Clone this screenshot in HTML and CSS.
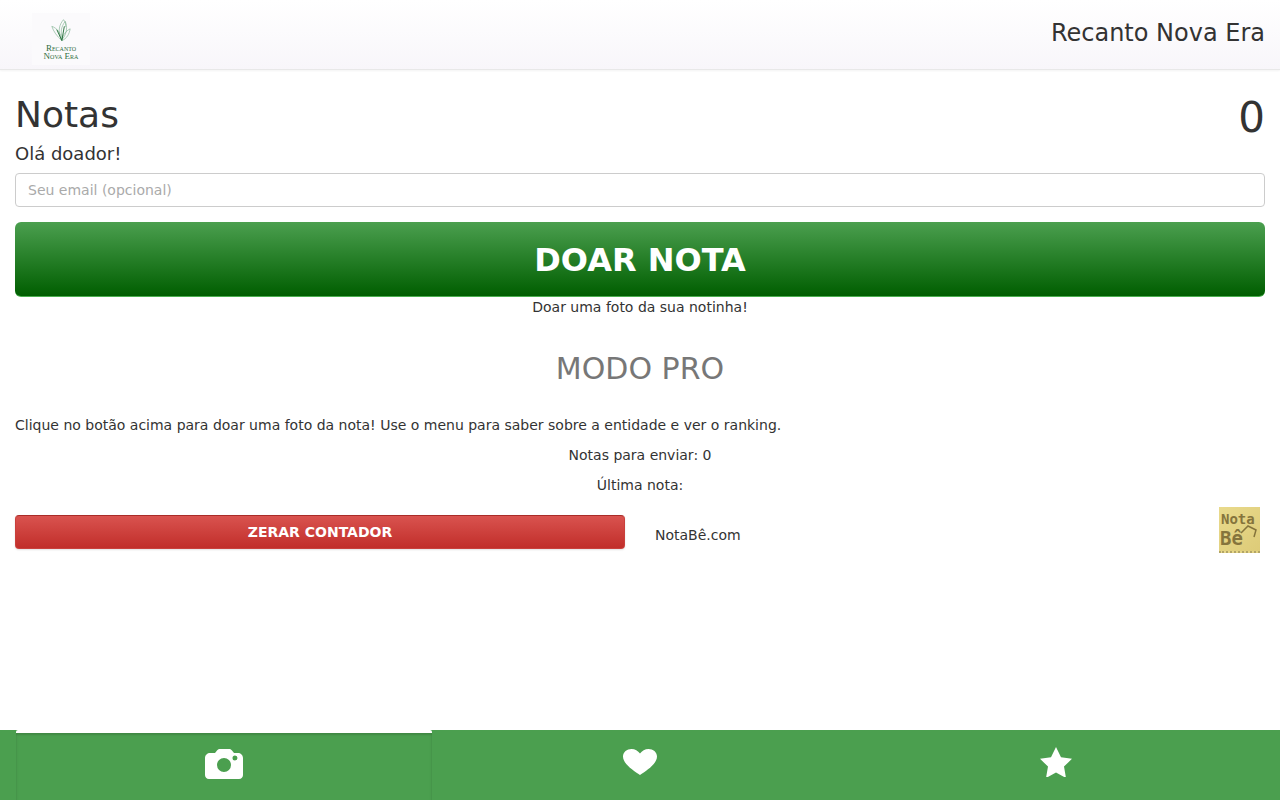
FILE: index.html
```html
<!DOCTYPE html>
<html lang="pt-BR">
<head>
  <meta charset="UTF-8" />
  <meta name="viewport" content="width=device-width, initial-scale=1.0"/>
  <title>Recanto Nova Era - Notas</title>
  <link rel="stylesheet" href="styles.css">
</head>
<body>
  <header class="topo">
    <div class="logo">
      <svg class="logo-folha" width="20" height="25" viewBox="0 0 24 28" fill="none" stroke="#5f9f75" stroke-width="0.6">
        <path d="M13 26C7 21 3 15 1 9c6 2 11 8 12 17z"/>
        <path d="M12 24C8 14 10 7 15 1c3 3 3 7 2 9"/>
        <path d="M14 24c-3-8-2-14 3-21 3 6 2 15-3 21z"/>
        <path d="M13 26c1-6 4-11 10-14-1 6-4 12-10 14z"/>
        <path d="M13 26L7 13M13 26L16 9" stroke="#1f6b35" stroke-width="1.100"/>
      </svg>
      <span class="logo-nome">Recanto</span>
      <span class="logo-nome">Nova Era</span>
    </div>
    <div class="topo-titulo">Recanto Nova Era</div>
  </header>

  <main class="conteudo">
    <div class="linha-titulo">
      <h1>Notas</h1>
      <span class="contador">0</span>
    </div>
    <p class="ola">Olá doador!</p>
    <input class="campo" type="email" placeholder="Seu email (opcional)">
    <button class="btn-doar" type="button">DOAR NOTA</button>
    <p class="sub">Doar uma foto da sua notinha!</p>
    <h2>MODO PRO</h2>
    <p class="texto">Clique no botão acima para doar uma foto da nota! Use o menu para saber sobre a entidade e ver o ranking.</p>
    <p class="centro">Notas para enviar: 0</p>
    <p class="centro">Última nota:</p>
    <div class="rodape-linha">
      <button class="btn-zerar" type="button">ZERAR CONTADOR</button>
      <div class="marca">
        <span>NotaBê.com</span>
        <div class="selo">
          <span class="selo-nota">Nota</span>
          <span class="selo-be">Bê</span>
          <svg class="selo-seta" width="18" height="16" viewBox="0 0 18 16" fill="none" stroke="#85743c" stroke-width="1.500">
            <path d="M1 9l7-7 8 4-2 7"/>
          </svg>
        </div>
      </div>
    </div>
  </main>

  <nav class="abas">
    <a class="aba ativa" href="#">
      <svg width="38" height="30" viewBox="0 0 38 30" fill="#fff">
        <path fill-rule="evenodd" d="M5 4h5l2-2.500C12.600.6 13.500 0 15 0h9c1.500 0 2.400.6 3 1.500L29 4h4c2.500 0 5 2 5 5v17c0 2-1.500 4-4 4H4c-2.500 0-4-2-4-4V9c0-3 2.500-5 5-5zm14 5a7 7 0 1 0 0 14 7 7 0 0 0 0-14zm11-2.500a2.500 2.500 0 1 0 0 5 2.500 2.500 0 0 0 0-5z"/>
      </svg>
    </a>
    <a class="aba" href="#">
      <svg class="ic-coracao" width="34" height="26" viewBox="0 0 34 26" fill="#fff">
        <path d="M17 26C11 22 0 15 0 7.500 0 3 4 0 8.500 0 12 0 15 1.800 17 4.500 19 1.800 22 0 25.500 0 30 0 34 3 34 7.500 34 15 23 22 17 26z"/>
      </svg>
    </a>
    <a class="aba" href="#">
      <svg width="32" height="30" viewBox="0 0 32 30" fill="#fff">
        <path d="M16 0l5 10.300 11 1.500-8 7.800 2 11.400-10-5.400-10 5.400 2-11.400-8-7.800 11-1.500z"/>
      </svg>
    </a>
  </nav>
</body>
</html>
```

FILE: styles.css
```css
* { margin: 0; padding: 0; box-sizing: border-box; }
html, body { height: 100%; }
body { background: #fff; color: #333; font-family: "DejaVu Sans", sans-serif; font-size: 14px; height: 800px; display: flex; flex-direction: column; overflow: hidden; }

.topo { height: 70px; flex: none; padding: 0 15px 4px 32px; display: flex; justify-content: space-between; align-items: center; background: linear-gradient(#fff, #f8f6fa); border-bottom: 1px solid #e8e8e8; box-shadow: 0 1px 2px rgba(0,0,0,.05); }
.topo-titulo { font-size: 24px; }
.logo { width: 58px; height: 52px; margin-top: 12px; display: flex; flex-direction: column; align-items: center; background: #fbfafc; }
.logo-folha { flex: none; margin-top: 5px; margin-bottom: 1px; }
.logo-nome { font-family: "Liberation Serif", serif; font-size: 9px; line-height: 8px; color: #2f6d40; font-variant: small-caps; white-space: nowrap; }

.conteudo { flex: 1; padding: 22px 15px 0; }
.linha-titulo { display: flex; justify-content: space-between; align-items: center; height: 48px; }
h1 { font-size: 36px; font-weight: 400; margin-top: -4px; }
.contador { font-size: 42px; margin-top: 2px; }
.ola { font-size: 18px; line-height: 24px; margin-top: 2px; }
.campo { display: block; width: 100%; height: 34px; margin-top: 7px; padding: 0 12px; font: 14px "DejaVu Sans", sans-serif; border: 1px solid #ccc; border-radius: 4px; }
.campo::placeholder { color: #aaa; }

.btn-doar { display: block; width: 100%; height: 75px; margin-top: 15px; padding-top: 2px; color: #fff; font: bold 32px "DejaVu Sans", sans-serif; background: linear-gradient(#4b9f4f, #005e00); border: none; border-bottom: 1px solid #4caf50; border-radius: 6px; }
.sub { text-align: center; line-height: 20px; margin-top: 0; }
h2 { text-align: center; font-size: 30px; font-weight: 400; color: #777; line-height: 33px; margin-top: 35px; }
.texto { line-height: 20px; margin-top: 30px; }
.centro { text-align: center; line-height: 20px; margin-top: 10px; }

.rodape-linha { display: flex; margin-top: 20px; gap: 30px; }
.btn-zerar { flex: none; width: 610px; height: 34px; color: #fff; font: bold 14px "DejaVu Sans", sans-serif; background: linear-gradient(#d9534f, #c12e2a); border: 1px solid #c9403c; border-top-color: #a92c28; border-radius: 4px; box-shadow: 0 1px 2px rgba(0,0,0,.12); }
.marca { flex: 1; display: flex; justify-content: space-between; align-items: flex-start; }
.marca > span { margin-top: 12px; }
.selo { position: relative; width: 41px; height: 46px; margin: -8px 5px 0 0; background: linear-gradient(135deg, #e9da8c, #ddcb78); border-bottom: 2px dotted #b3a566; font-family: "DejaVu Sans Mono", monospace; font-weight: bold; color: #85743c; }
.selo-nota { position: absolute; left: 2px; top: 3px; font-size: 14px; line-height: 18px; }
.selo-be { position: absolute; left: 1px; top: 19px; font-size: 19px; line-height: 24px; }
.selo-seta { position: absolute; right: 2px; top: 17px; }

.abas { height: 70px; flex: none; display: flex; padding: 0 16px; background: #4b9f4f; }
.aba { flex: 1; display: flex; justify-content: center; padding-top: 17px; }
.aba.ativa { border-top: 3px solid #fff; border-radius: 2px 2px 0 0; padding-top: 16px; box-shadow: inset 0 2px 2px rgba(0,0,0,.14), inset 3px 0 3px -2px rgba(0,0,0,.03), inset -3px 0 3px -2px rgba(0,0,0,.03); }
.ic-coracao { margin-top: 2px; }
```
